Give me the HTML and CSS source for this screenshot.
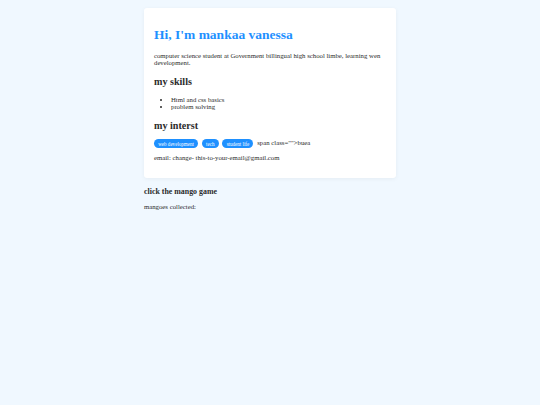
FILE: index.html
```html
<!DOCTYPE html>
<html lang="en">
<head>
<meta charset="utf-8">
<title>mankaa vanessa</title>
<link rel="stylesheet" href="styles.css">
</head>
<body>
<div class="page">
  <div class="card">
    <h1 class="title">Hi, I'm mankaa vanessa</h1>
    <p>computer science student at Government billingual high school limbe, learning wen development.</p>
    <h2>my skills</h2>
    <ul class="skills">
      <li>Html and css basics</li>
      <li>problem solving</li>
    </ul>
    <h2 class="interest">my interst</h2>
    <div class="tags">
      <span class="tag">web development</span>
      <span class="tag">tech</span>
      <span class="tag">student life</span>
      span class=&quot;&quot;&gt;buea
    </div>
    <p class="email">email: change- this-to-your-email@gmail.com</p>
  </div>
  <h3>click the mango game</h3>
  <p>mangoes collected:</p>
</div>
</body>
</html>
```
FILE: styles.css
```css
html {
  background: #f0f8ff;
}
body {
  margin: 0;
  padding: 8px 0;
  background: #f0f8ff;
  font-family: "Liberation Serif", "Times New Roman", serif;
  font-size: 6.75px;
  line-height: 7.6px;
  color: #2b2b2b;
}
.page {
  width: 252px;
  margin: 0 auto;
}
.card {
  background: #ffffff;
  padding: 10px;
  border-radius: 3px;
  box-shadow: 0 1px 4px rgba(0, 0, 0, 0.05);
}
.title {
  color: #1e90ff;
  font-size: 13.5px;
  line-height: 15.6px;
  margin: 9px 0;
}
h2 {
  font-size: 10.125px;
  line-height: 11.5px;
  margin: 9.2px 0 8.4px;
}
.interest {
  margin-bottom: 7.4px;
}
h3 {
  font-size: 7.9px;
  line-height: 9px;
  margin: 9.5px 0 6.3px;
}
p {
  margin: 6.75px 0;
}
.email {
  margin: 5.5px 0 6.75px;
}
.skills {
  margin: 6.75px 0;
  padding-left: 17px;
}
.tags {
  margin: 0;
}
.tag {
  display: inline-block;
  vertical-align: middle;
  background: #1e90ff;
  color: #ffffff;
  font-size: 5.06px;
  line-height: 6px;
  padding: 1.5px 4.2px;
  border-radius: 8px;
  margin-right: 2.1px;
}
```
